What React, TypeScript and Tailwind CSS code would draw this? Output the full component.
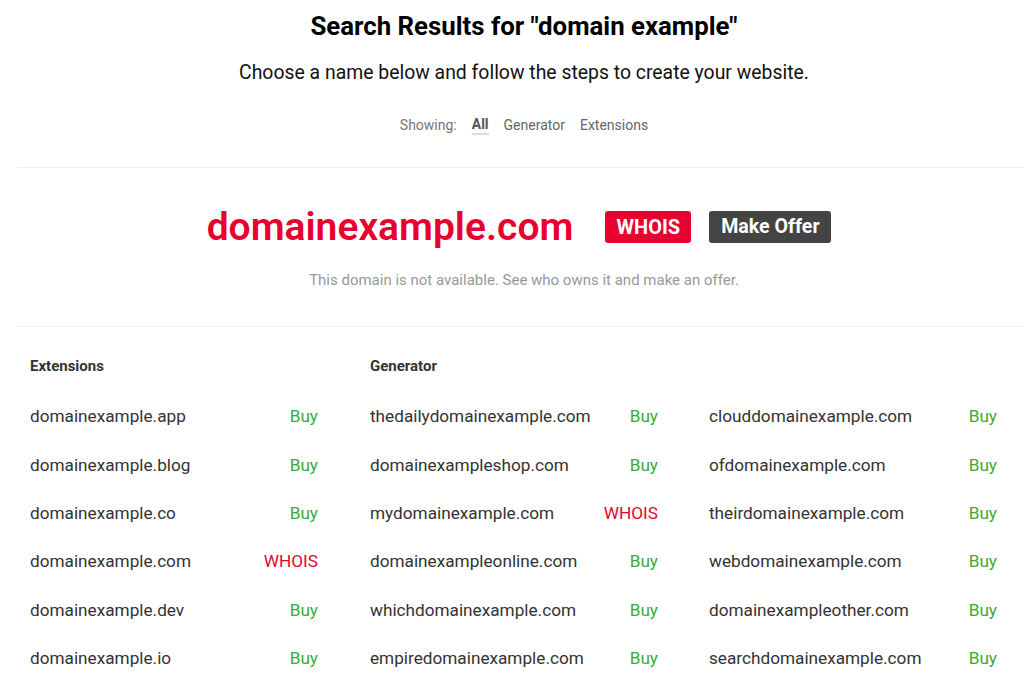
import React from "react";

const ext: [string, string][] = [
  ["domainexample.app", "Buy"],
  ["domainexample.blog", "Buy"],
  ["domainexample.co", "Buy"],
  ["domainexample.com", "WHOIS"],
  ["domainexample.dev", "Buy"],
  ["domainexample.io", "Buy"],
];
const gen1: [string, string][] = [
  ["thedailydomainexample.com", "Buy"],
  ["domainexampleshop.com", "Buy"],
  ["mydomainexample.com", "WHOIS"],
  ["domainexampleonline.com", "Buy"],
  ["whichdomainexample.com", "Buy"],
  ["empiredomainexample.com", "Buy"],
];
const gen2: [string, string][] = [
  ["clouddomainexample.com", "Buy"],
  ["ofdomainexample.com", "Buy"],
  ["theirdomainexample.com", "Buy"],
  ["webdomainexample.com", "Buy"],
  ["domainexampleother.com", "Buy"],
  ["searchdomainexample.com", "Buy"],
];

function Col({ items }: { items: [string, string][] }) {
  return (
    <div className="flex w-[288px] flex-col">
      {items.map(([d, a]) => (
        <div key={d} className="flex h-[48.4px] items-center justify-between text-[17.2px] text-[#333]">
          <span>{d}</span>
          <span className={a === "Buy" ? "text-[#3aaa35]" : "text-[#e8002f]"}>{a}</span>
        </div>
      ))}
    </div>
  );
}

export default function App() {
  return (
    <div className="min-h-[683px] bg-white font-['Roboto',sans-serif] text-[#222]">
      <div className="pl-[24px] pt-[10px] text-center">
        <h1 className="text-[25.8px] font-bold leading-[32px] text-black">Search Results for "domain example"</h1>
        <p className="mt-[17px] text-[19.4px] leading-[28px] text-[#111]">
          Choose a name below and follow the steps to create your website.
        </p>
        <div className="mt-[28px] flex h-[20px] items-center justify-center gap-[15px] text-[14px] leading-[20px] text-[#666]">
          <span className="text-[#777]">Showing:</span>
          <span className="border-b-2 border-[#ddd] font-bold leading-[18px] text-[#555]">All</span>
          <span>Generator</span>
          <span>Extensions</span>
        </div>
      </div>
      <div className="ml-[17px] mt-[32px] h-px bg-[#eeeeee]" />
      <div className="pt-[37px] text-center">
        <div className="flex h-[44px] items-center justify-center pl-[14px]">
          <span className="text-[39px] font-semibold leading-[44px] text-[#e8002f]">domainexample.com</span>
          <button className="ml-[32px] h-[32px] w-[86px] rounded-[3px] bg-[#e8002f] text-[20px] font-bold text-white">
            WHOIS
          </button>
          <button className="ml-[18px] h-[32px] w-[122px] rounded-[3px] bg-[#444444] text-[19.6px] font-bold text-white">
            Make Offer
          </button>
        </div>
        <p className="mt-[19px] pl-[24px] text-[15px] leading-[24px] text-[#999]">
          This domain is not available. See who owns it and make an offer.
        </p>
      </div>
      <div className="ml-[17px] mt-[34px] h-px bg-[#eeeeee]" />
      <div className="flex gap-[52px] pl-[30px] pt-[29px]">
        <div>
          <h2 className="text-[15px] font-bold leading-[20px] text-[#333]">Extensions</h2>
          <div className="mt-[17px]">
            <Col items={ext} />
          </div>
        </div>
        <div>
          <h2 className="text-[15px] font-bold leading-[20px] text-[#333]">Generator</h2>
          <div className="mt-[17px] flex gap-[51px]">
            <Col items={gen1} />
            <Col items={gen2} />
          </div>
        </div>
      </div>
    </div>
  );
}
